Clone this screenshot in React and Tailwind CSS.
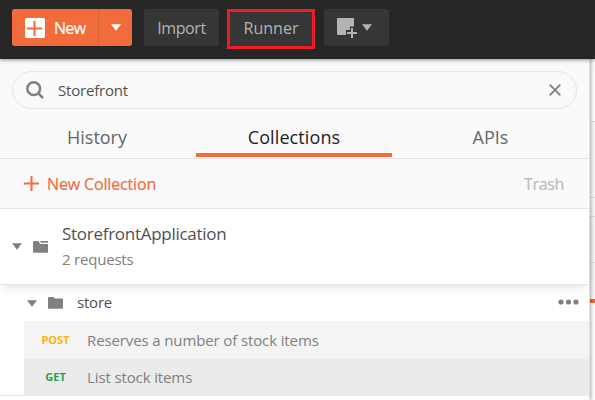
const Caret = ({ className }) => (
  <svg width="10" height="7" viewBox="0 0 10 7" className={className} fill="currentColor">
    <path d="M0 0.3h10L5 6.8z" />
  </svg>
);

function Toolbar() {
  return (
    <header className="relative z-20 flex h-[59px] shrink-0 items-start bg-[#262626] pl-3 pt-[9px] text-base text-[#b3b3b3] shadow-[0_1px_4px_rgba(0,0,0,0.45)]">
      <div className="flex h-[37px] w-[120px] overflow-hidden rounded-[3px] bg-[#f26b3a] text-white">
        <button className="flex w-[87px] items-center border-r border-[#d9623a] pl-[13px]">
          <svg width="20" height="20" viewBox="0 0 20 20" className="shrink-0">
            <rect width="20" height="20" rx="2" fill="#fff" />
            <path d="M9.5 3v15M2 10.5h15" stroke="#f26b3a" strokeWidth="2" fill="none" />
          </svg>
          <span className="ml-[9px] font-medium tracking-[-0.7px] [-webkit-text-stroke:0.2px_currentColor]">New</span>
        </button>
        <button className="flex flex-1 items-center justify-center">
          <Caret />
        </button>
      </div>
      <button className="ml-3 h-[37px] w-[75px] rounded-[3px] bg-[#363636] font-medium tracking-[-0.4px]">Import</button>
      <div className="ml-2 h-10 w-[88px] border-[3px] border-[#ed1c24]">
        <button className="h-[34px] w-full rounded-[3px] bg-[#363636] pb-[3px] font-medium">Runner</button>
      </div>
      <button className="ml-[9px] flex h-[37px] w-[65px] items-center rounded-[3px] bg-[#363636] pl-[13px]">
        <svg width="20" height="20" viewBox="0 0 20 20" fill="#b3b3b3">
          <path d="M1 0h15a1 1 0 0 1 1 1v7.5h-4V12H9v5H1a1 1 0 0 1-1-1V1a1 1 0 0 1 1-1z" />
          <path d="M14 10h2v4h4v2h-4v4h-2v-4h-4v-2h4z" />
        </svg>
        <Caret className="ml-[5px]" />
      </button>
    </header>
  );
}

function Search() {
  return (
    <div className="mx-3 mt-3 flex h-[38px] items-center rounded-full border border-[#e6e6e6] pl-[13px] pr-[15px]">
      <svg width="18" height="18" viewBox="0 0 18 18" fill="none" stroke="#808080">
        <circle cx="7.7" cy="7.7" r="6.4" strokeWidth="2.5" />
        <path d="M12.3 12.3l4.8 4.8" strokeWidth="2.6" />
      </svg>
      <span className="ml-[14px] flex-1 text-[15px] tracking-[-0.2px] text-[#505050]">Storefront</span>
      <svg width="12" height="12" viewBox="0 0 12 12" fill="none" stroke="#808080" strokeWidth="1.8">
        <path d="M.7.7l10.6 10.6M11.3.7L.7 11.3" />
      </svg>
    </div>
  );
}

function Tabs() {
  return (
    <nav className="grid h-[50px] grid-cols-[196px_196px_1fr] border-b border-[#e6e6e6] text-center text-lg leading-[27px] text-[#666]">
      <div className="pr-[2px] pt-[15px]">History</div>
      <div className="mb-px border-b-4 border-[#f26b3a] pt-[15px] tracking-[0.1px] text-[#222]">Collections</div>
      <div className="pt-[15px]">APIs</div>
    </nav>
  );
}

function Folder({ collection }) {
  return (
    <svg width="15" height="12" viewBox="0 0 15 12" fill="#808080">
      {collection ? (
        <path d="M0 1a1 1 0 0 1 1-1h4.5L7 3h8v8a.7.7 0 0 1-.7.7H.7A.7.7 0 0 1 0 11zM7 0h8v1.7H8z" />
      ) : (
        <path d="M0 1a1 1 0 0 1 1-1h4.5L7 1.4h7a1 1 0 0 1 1 1V11a.7.7 0 0 1-.7.7H.7A.7.7 0 0 1 0 11z" />
      )}
    </svg>
  );
}

function Sidebar() {
  return (
    <aside className="relative z-10 flex h-[341px] w-[590px] flex-col border-r border-[#e2e2e2] bg-white shadow-[1px_0_4px_rgba(0,0,0,0.35)]">
      <div className="flex flex-col bg-[#fafafa]">
        <Search />
        <Tabs />
        <div className="flex h-[50px] items-center justify-between border-b border-[#e6e6e6] pl-6 pr-[25px] text-base font-medium">
          <div className="flex items-center text-[#f26b3a]">
            <svg width="15" height="15" viewBox="0 0 15 15" stroke="currentColor" strokeWidth="2">
              <path d="M7.5 0v15M0 7.5h15" />
            </svg>
            <span className="ml-2 tracking-[-0.15px] [-webkit-text-stroke:0.2px_currentColor]">New Collection</span>
          </div>
          <span className="tracking-[-0.35px] text-[#bbb] [-webkit-text-stroke:0.2px_currentColor]">Trash</span>
        </div>
      </div>
      <div className="relative flex h-[76px] shrink-0 items-center border-b border-[#e6e6e6] bg-white pl-3 shadow-[0_4px_10px_-3px_rgba(0,0,0,0.15)]">
        <Caret className="text-[#808080]" />
        <div className="ml-[11px]"><Folder collection /></div>
        <div className="ml-[14px]">
          <div className="text-[17px] leading-[26px] tracking-[-0.28px] text-[#505050]">StorefrontApplication</div>
          <div className="text-[15px] leading-[25px] tracking-[-0.2px] text-[#808080]">2 requests</div>
        </div>
      </div>
      <div className="flex h-9 shrink-0 items-center pl-[27px] pr-[10px]">
        <Caret className="text-[#808080]" />
        <div className="ml-[11px]"><Folder /></div>
        <span className="ml-[14px] flex-1 pb-px text-[15px] tracking-[-0.2px] text-[#505050]">store</span>
        <svg width="21" height="6" viewBox="0 0 21 6" fill="#808080" className="-mt-[2px]">
          <circle cx="3" cy="3" r="2.6" /><circle cx="10.5" cy="3" r="2.6" /><circle cx="18" cy="3" r="2.6" />
        </svg>
      </div>
      <div className="ml-6 flex h-[38px] shrink-0 items-center bg-[#f4f4f4] text-[15px] text-[#808080]">
        <span className="w-[63px] text-center text-[11px] font-bold text-[#ffb400]">POST</span>
        <span className="tracking-[-0.12px]">Reserves a number of stock items</span>
      </div>
      <div className="flex h-[37px] shrink-0">
        <div className="w-6 border-b border-[#e6e6e6]" />
        <div className="flex flex-1 items-center bg-[#ebebeb] text-[15px] text-[#808080]">
          <span className="w-[63px] text-center text-[11px] font-bold text-[#249d57]">GET</span>
          <span className="tracking-[-0.12px]">List stock items</span>
        </div>
      </div>
    </aside>
  );
}

export default function App() {
  return (
    <div className="flex h-[400px] w-[595px] flex-col overflow-hidden bg-white font-['Open_Sans','Noto_Sans',sans-serif]">
      <Toolbar />
      <div className="flex">
        <Sidebar />
        <main className="flex flex-1 flex-col bg-white">
          <div className="h-[63px] border-b border-[#e0e0e0]" />
          <div className="h-[76px] border-b border-[#e0e0e0] bg-[#fafafa]" />
          <div className="h-[19px] border-b border-[#e0e0e0] bg-[#fafafa]" />
          <div className="h-[46px] border-b border-[#e0e0e0] bg-[#fafafa]" />
          <div className="h-[40px] border-b-4 border-[#f26b3a] bg-[#fafafa]" />
        </main>
      </div>
    </div>
  );
}
